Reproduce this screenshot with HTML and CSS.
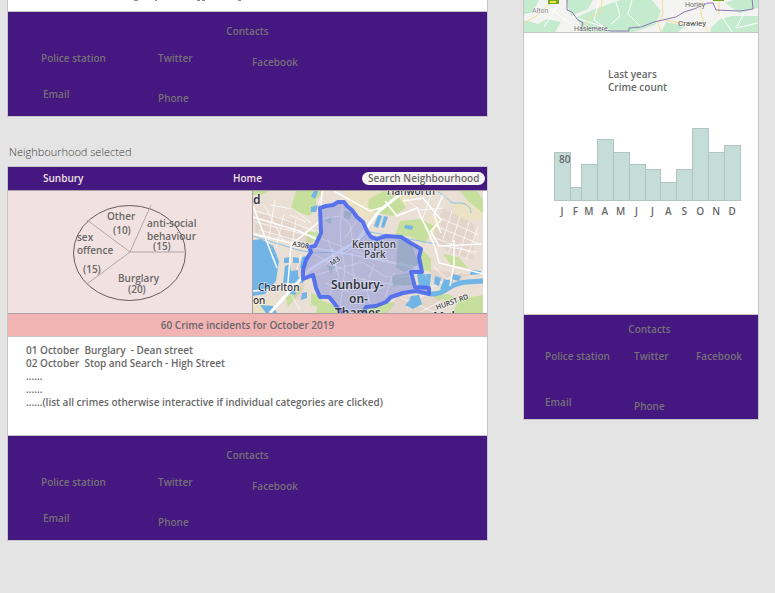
FILE: index.html
```html
<!DOCTYPE html>
<html lang="en">
<head>
<meta charset="utf-8">
<meta name="viewport" content="width=device-width, initial-scale=1">
<title>Neighbourhood crime</title>
<link rel="stylesheet" href="styles.css">
</head>
<body>
<main class="canvas">
  <div class="column">
    <section class="board">
      <div class="board-end">
        <svg class="clipped-line" viewBox="0 0 108 1" width="108" height="1" aria-hidden="true"><path d="M0 .5h4M21 .5h2M63 .5h3M68 .5h3M104 .5h3" stroke="#8c8c8c"/></svg>
      </div>
      <footer class="contacts">
        <h2>Contacts</h2>
        <nav class="contact-links">
          <a href="#">Police station</a><a href="#">Twitter</a><a href="#" class="lower">Facebook</a>
          <a href="#" class="inset">Email</a><a href="#" class="lower">Phone</a>
        </nav>
      </footer>
    </section>

    <h1 class="board-name">Neighbourhood selected</h1>

    <section class="board">
      <header class="topbar">
        <a href="#">Sunbury</a>
        <a href="#">Home</a>
        <input type="text" aria-label="Search Neighbourhood" placeholder="Search Neighbourhood">
      </header>
      <div class="panels">
        <svg class="pie" viewBox="0 0 244 122" role="img" aria-label="Crimes by category">
          <ellipse cx="121.500" cy="62" rx="56" ry="47.500" fill="none" stroke="#665c60"/>
          <path d="M143 14L122 61L79 29M178 61H122L79 93" fill="none" stroke="#b3a6a7"/>
          <g class="pie-text">
            <text x="99" y="29">Other</text><text x="105" y="43">(10)</text>
            <text x="139" y="36">anti-social</text><text x="139" y="49">behaviour</text><text x="145" y="59">(15)</text>
            <text x="69" y="50">sex</text><text x="69" y="63">offence</text><text x="75" y="82">(15)</text>
            <text x="110" y="91">Burglary</text><text x="120" y="102">(20)</text>
          </g>
        </svg>
        <div class="map-cell">
        <svg class="map" viewBox="0 0 230 122" role="img" aria-label="Map of Sunbury-on-Thames">
          <rect width="230" height="122" fill="#e9dfd5"/>
          <g fill="#eae2c3">
            <path d="M91 0h39l-7 33-16-9-14-13zM137 0h28l-10 14-22 1zM201 14l20-8 9 5v17l-19 2-10-6zM176 24l14 5-4 13-15 4zM0 106l22 4-4 13H0z"/>
          </g>
          <g fill="#c6df9d">
            <path d="M43 0h29l-9 8 1 9-8 8-18-7 2-8zM0 0h15l-6 4H0zM116 8l15-8 15 6 7 11-13 8-16-3-9-6zM147 30l20-2 14 7-9 18-16-8-14 0zM167 56l11 12v13l-11-3zM207 0h17l6 9v13l-14-11zM190 63l15 3 10 11-17-3zM54 41l10-1 3 8-14 5zM58 102l11 4-2 10-9-2zM32 104l14-10 4 4-15 18zM65 108l21 8 2 6H63zM107 117l25-7 10 2-8 10h-28zM206 108l24-4v18h-30zM177 104l18-1 9 5-16 3z"/>
          </g>
          <g fill="#d9c3bb" opacity=".35"><path d="M2 22l40 7 22 26-62-14zM190 17l31 16v36l-27-9-15-14zM40 66l15 4-6 39-13-3zM177 79l40 4-10 8-28-2zM146 104l46 3-9 15h-51z"/></g>
          <g fill="none" stroke="#fff" opacity=".7">
            <path d="M3 20l30 9 30 12M12 15l18 34M22 9l-7 43M31 23l-8 34M43 29l-5 31M53 31l-16-7M2 31l61 15M7 39l53 15M17 14l23 4 18 14M71 0l-8 18M199 20l-9 28M207 25l-11 36M216 31l-10 34M225 36l-12 33M187 27l39 17M183 35l43 18M180 46l42 17M166 24l19 30 39 7M48 64l-11 38 10 17M179 0l-9 27M151 7l16 12 24-2M165 92l12 5 30-16M148 107l36 15M154 117l21-16M168 121l23-13M180 75l20 19"/>
          </g>
          <g fill="#71b5e6">
            <path d="M0 49l8-1 12 7 6 15-3 20-11 13-12 2zM32 75l5-2 1 7 7-1v7l6 1-1 5-20 0zM31 67l6-1v6h-6zM40 66l6 1v5h-6zM49 66l5-1-3 13-4-1zM58 16l7-2-2 7h-5zM61 0h4l-3 8-4-3zM49 102l5-1v6l-6 2zM7 114l13 1 4 7H13zM125 24l4 1-4 12-4-2zM131 25l4 1-4 11-3-1zM152 34l8 1-1 4-8-2zM164 83l8 0 4 14-10-1zM173 83h5l-1 12-3-1zM182 85l6 2-2 8-5-2zM191 88l9 2-5 9-8-1zM200 83l8 2-2 5-8-2zM158 105l8-1 3 9-9 5-8-4 4-4zM218 79l10 1v3l-11 1zM36 97l5-1 2 8-6-1z"/>
          </g>
          <path d="M176 103c19 1 18-11 38-12l18-1" fill="none" stroke="#71b5e6" stroke-width="5"/>
          <path d="M185 1c11 5 10 12 19 11 9-1 14 4 14 10M0 45l45 14 17 3 29-1 26-20 66 12" fill="none" stroke="#8dc4e5"/>
          <g fill="none" stroke="#fff" stroke-width="1.500">
            <path d="M0 43l55 13 51 9 62 13M0 15l24 62M69 0l-2 30-29 24-4 50M81 0l36 20 14-4M132 10l12 15 20-8 18 39 4 16 45 11M150 10l20-3 18 22-10 11 8 15 43-2M190 4l-9 20 7 18M201 49v24l-4 22M0 100l22-2M63 48l-17-8-46-14"/>
            <path d="M17 122l39-43 48-29 22-30 24-19" stroke-width="3"/>
          </g>
          <path d="M67 17L73 15 80 14 85 11 91 11 94 15 99 19 104 26 110 31 114 40 118 46 124 48 133 45 148 46 156 51 168 58 166 66 169 81 158 81 162 96 176 97 176 103 163 100 150 102 138 106 133 111 123 115 113 116 110 123H89L81 112 76 106 67 106 63 97 60 84 50 88 50 79 53 69 58 61 56 56 62 55 68 42z" fill="#8490dc" fill-opacity=".5"/>
          <g fill="none" stroke="#d0d5f3" opacity=".6">
            <path d="M68 28l19-3 10 8 3 21M90 12l-3 25 1 19 4 22-5 39M69 48l48 18 47 10M62 84l47-13 24 15 31-1M75 48l11 38-11 20M61 63l46 25 42 7M112 43l-15 15-36 22M105 28l-13 19M72 92l27 10 31-5M141 82l-9 24M111 87l6 26M121 73l-5 14M99 61l2 31M79 57l5 24"/>
          </g>
          <g fill="#7f9fb8" opacity=".5"><path d="M71 29l8-3-1 7zM91 20l8 1-2 7-6-1zM145 48l13 5 8 20-14 8-9-4zM139 85l16-3 4 12-19 1zM74 75l8 0-4 8z"/></g>
          <path d="M110 123L113 116 123 115 133 111 138 106 150 102 163 100 176 103 176 97 162 96 158 81 169 81 166 66 168 58 156 51 148 46 133 45 124 48 118 46 114 40 110 31 104 26 99 19 94 15 91 11 85 11 80 14 73 15 67 17 68 42 62 55 56 56 58 61 53 69 50 79 50 88 60 84 63 97 67 106 76 106 81 112 89 123" fill="none" stroke="#4a68ee" stroke-opacity=".9" stroke-width="4" stroke-linejoin="round"/>
          <g class="map-text">
            <text x="0" y="13" class="town">d</text>
            <text x="134" y="4">Hanworth</text>
            <text x="39" y="55" class="road" transform="rotate(9 39 55)">A308</text>
            <text x="79" y="75" class="road" transform="rotate(-35 79 75)">M3</text>
            <text x="99" y="57">Kempton</text><text x="111" y="67">Park</text>
            <text x="5" y="100">Charlton</text><text x="0" y="113">on</text>
            <text x="78" y="98" class="town">Sunbury-</text><text x="96" y="112" class="town">on-</text><text x="82" y="126" class="town">Thames</text>
            <text x="184" y="119" class="road" transform="rotate(-20 184 119)">HURST RD</text>
            <text x="180" y="130" class="town">Molesey</text>
          </g>
        </svg>
        </div>
      </div>
      <p class="summary">60 Crime incidents for October 2019</p>
      <ul class="incidents">
        <li>01 October  Burglary  - Dean street</li>
        <li>02 October  Stop and Search - High Street</li>
        <li>......</li>
        <li>......</li>
        <li>......(list all crimes otherwise interactive if individual categories are clicked)</li>
      </ul>
      <footer class="contacts">
        <h2>Contacts</h2>
        <nav class="contact-links">
          <a href="#">Police station</a><a href="#">Twitter</a><a href="#" class="lower">Facebook</a>
          <a href="#" class="inset">Email</a><a href="#" class="lower">Phone</a>
        </nav>
      </footer>
    </section>
  </div>

  <div class="column">
    <section class="board">
      <svg class="county" viewBox="0 0 234 32" role="img" aria-label="County map">
        <rect width="234" height="32" fill="#f3f4f1"/>
        <g fill="#c5ebcf">
          <path d="M0 0h15l-6 12-9 4zM0 20l14 4 9-5 14 3-6 10H0zM42 0h27l-5 9-17 7zM51 18l20-9 25-9 32 0 9 11-6 14-21 7H62l-7-9zM186 29l10-10 12-3 26 0v16h-47zM201 3l8-3h25v8l-18 5zM142 22l20 4-8 6h-17z"/>
        </g>
        <g fill="none" stroke="#fff" stroke-width="1"><path d="M0 15l27-6 19 15M37 0L20 27M75 0l-5 20 17 12M92 2l4 14-9 8M108 0l-4 14 14 14M198 17l10 15M220 13l-8 15 22-5M191 4l9 15M49 17l34 11"/></g>
        <g fill="none" stroke="#f8dc90"><path d="M0 23l11-6 19-17M59 31l5-12 13-8 1-11M138 0l1 14-5 9 3 9M177 0v14l3 9 4 9M195 0v14M141 20l18 4 20-1"/></g>
        <path d="M43 0v10l5 2 5 7 6 4-2 6 13-1 17 3h18v-3l12-1 13-5 22-5 8-5 10-3 14-6 5 0 3 7 24 1 7-1 6-1-1-12" fill="none" stroke="#8d77b3"/>
        <path d="M24 0h11v4H24zM189 0h11v1h-11z" fill="#74a71b"/>
        <path d="M26 2h6" stroke="#f4e44b" stroke-width="2"/>
        <g class="county-text"><text x="8" y="13" class="faint">Alton</text><text x="50" y="31">Haslemere</text><text x="161" y="7">Horley</text><text x="154" y="26" class="city">Crawley</text></g>
      </svg>
      <div class="chart">
        <h2 class="chart-title">Last years<br>Crime count</h2>
        <ol class="bars">
          <li><span class="bar" style="height:49px">80</span>J</li>
          <li class="narrow"><span class="bar" style="height:14px"></span>F</li>
          <li><span class="bar" style="height:37px"></span>M</li>
          <li><span class="bar" style="height:62px"></span>A</li>
          <li><span class="bar" style="height:49px"></span>M</li>
          <li><span class="bar" style="height:37px"></span>J</li>
          <li><span class="bar" style="height:32px"></span>J</li>
          <li><span class="bar" style="height:19px"></span>A</li>
          <li><span class="bar" style="height:32px"></span>S</li>
          <li><span class="bar" style="height:73px"></span>O</li>
          <li><span class="bar" style="height:49px"></span>N</li>
          <li><span class="bar" style="height:56px"></span>D</li>
        </ol>
      </div>
      <footer class="contacts compact">
        <h2>Contacts</h2>
        <nav class="contact-links">
          <a href="#">Police station</a><a href="#">Twitter</a><a href="#">Facebook</a>
          <a href="#">Email</a><a href="#" class="lower">Phone</a>
        </nav>
      </footer>
    </section>
  </div>
</main>
</body>
</html>
```
FILE: styles.css
```css
* { box-sizing: border-box; }
body {
  margin: 0;
  background: #e4e4e4;
  color: #686868;
  font: 600 10px/13px "Open Sans", "Noto Sans", sans-serif;
}
h1, h2, p, ul, ol { margin: 0; padding: 0; font: inherit; }
li { list-style: none; }
a { color: inherit; text-decoration: none; }
svg { display: block; }

.canvas {
  display: grid;
  grid-template-columns: 481fr 236fr;
  gap: 35px;
  align-items: start;
  padding: 0 16px 0 7px;
}
.board { background: #fff; border: 1px solid #c6c6c6; }
.column > .board:first-child { border-top: 0; }
.board-end { height: 11px; border-bottom: 1px solid #c6c6c6; box-sizing: content-box; }
.clipped-line { margin-left: 126px; }
.column .board-name { padding: 27px 2px 6px; font-size: 11px; font-weight: 300; line-height: 16px; color: #404040; }

.contacts { min-height: 104px; padding: 13px 0 0 33px; background: #451780; color: #757078; }
.contacts h2 { margin: 0 33px 14px 0; text-align: center; }
.contact-links {
  display: grid;
  grid-template-columns: 117fr 94fr 235fr;
  grid-template-rows: 36px 22px;
  align-items: start;
}
.lower { padding-top: 4px; }
.inset { padding-left: 2px; }
.compact { padding: 8px 0 0 21px; }
.compact h2 { margin: 0 4px 14px 0; }
.compact .contact-links { grid-template-columns: 89fr 62fr 62fr; grid-template-rows: 46px 22px; }

.topbar {
  display: grid;
  grid-template-columns: 190fr 129fr 123px;
  align-items: center;
  height: 23px;
  padding: 0 2px 0 35px;
  background: #451780;
  color: #f2e1e1;
}
.topbar input {
  width: 100%;
  height: 13px;
  padding: 0 2px 0 6px;
  border: 0;
  border-radius: 7px;
  background: #f8f6f2;
  color: #686868;
  font: inherit;
}
.topbar input::placeholder { color: #686868; opacity: 1; }

.panels {
  display: grid;
  grid-template-columns: 244fr 235fr;
  border-top: 1px solid #a8a0a5;
  background: #f2e1e1;
}
.pie, .map { width: 100%; height: auto; }
.pie-text { fill: #686868; }
.map-cell { padding-right: 4px; border-left: 1px solid #a8a0a5; background: #fff; }
.map-text { fill: #333742; font-family: "Noto Sans", sans-serif; font-weight: 500; font-size: 10px; stroke: #fff; stroke-width: 2px; stroke-opacity: .4; paint-order: stroke; }
.map-text .town { font-size: 12px; font-weight: 600; }
.map-text .road { font-size: 7px; }
.board .summary {
  padding: 5px 0 4px;
  border-top: 1px solid #a8a0a5;
  border-bottom: 1px solid #c6c6c6;
  background: #f2b3b3;
  text-align: center;
}
.incidents { min-height: 99px; border-bottom: 1px solid #c6c6c6; }
.board .incidents { padding: 7px 18px; }
.incidents li { white-space: pre-wrap; }

.county { width: 100%; height: auto; border-bottom: 1px solid #c6c6c6; }
.county-text { fill: #666; font: 400 7px Roboto, sans-serif; stroke: #fff; stroke-width: 1px; stroke-opacity: .7; paint-order: stroke; }
.county-text .faint { fill: #888; }
.county-text .city { fill: #444; font-size: 8px; }
.chart { min-height: 282px; padding: 35px 18px 0 30px; border-bottom: 1px solid #c6c6c6; }
.chart .chart-title { padding-left: 54px; }
.board .bars { display: flex; align-items: flex-end; margin-top: 34px; }
.bars li { flex: 16 1 0; min-width: 0; text-align: center; text-indent: 4px; }
.bars .narrow { flex-grow: 11; }
.bar {
  display: block;
  margin: 0 -1px 4px 0;
  border: 1px solid #b3c4c0;
  background: #c4ddd8;
}
```
